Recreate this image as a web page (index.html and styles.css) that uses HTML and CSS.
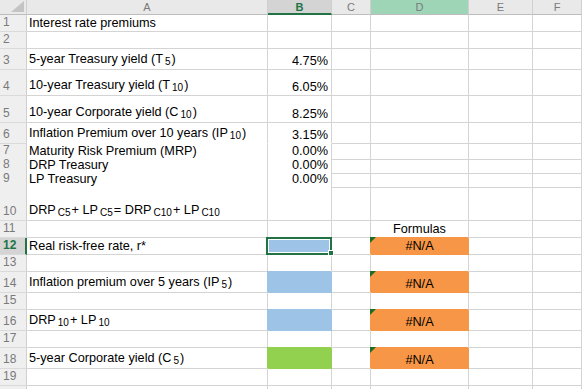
FILE: index.html
```html
<!DOCTYPE html>
<html lang="en">
<head>
<meta charset="utf-8">
<title>Interest rate premiums</title>
<link rel="stylesheet" href="styles.css">
</head>
<body>
<div class="sheet">
  <div class="row h15">
    <div class="corner"></div>
    <div class="ch">A</div>
    <div class="ch ch-active">B</div>
    <div class="ch">C</div>
    <div class="ch ch-hl">D</div>
    <div class="ch">E</div>
    <div class="ch">F</div>
  </div>

  <div class="row h17">
    <div class="rh">1</div>
    <div class="c">Interest rate premiums</div>
    <div class="c"></div><div class="c"></div><div class="c"></div><div class="c"></div><div class="c"></div>
  </div>
  <div class="row h17">
    <div class="rh">2</div>
    <div class="c"></div><div class="c"></div><div class="c"></div><div class="c"></div><div class="c"></div><div class="c"></div>
  </div>
  <div class="row h21">
    <div class="rh">3</div>
    <div class="c lift">5-year Treasury yield (T<sub>5</sub>)</div>
    <div class="c num">4.75%</div>
    <div class="c"></div><div class="c"></div><div class="c"></div><div class="c"></div>
  </div>
  <div class="row h26">
    <div class="rh">4</div>
    <div class="c lift">10-year Treasury yield (T<sub>10</sub>)</div>
    <div class="c num">6.05%</div>
    <div class="c"></div><div class="c"></div><div class="c"></div><div class="c"></div>
  </div>
  <div class="row h27">
    <div class="rh">5</div>
    <div class="c lift">10-year Corporate yield (C<sub>10</sub>)</div>
    <div class="c num">8.25%</div>
    <div class="c"></div><div class="c"></div><div class="c"></div><div class="c"></div>
  </div>
  <div class="row h21">
    <div class="rh">6</div>
    <div class="c plain lift">Inflation Premium over 10 years (IP<sub>10</sub>)</div>
    <div class="c num plain">3.15%</div>
    <div class="c"></div><div class="c"></div><div class="c"></div><div class="c"></div>
  </div>
  <div class="row h14">
    <div class="rh">7</div>
    <div class="c plain">Maturity Risk Premium (MRP)</div>
    <div class="c num plain">0.00%</div>
    <div class="c"></div><div class="c"></div><div class="c"></div><div class="c"></div>
  </div>
  <div class="row h14">
    <div class="rh">8</div>
    <div class="c plain">DRP Treasury</div>
    <div class="c num plain">0.00%</div>
    <div class="c"></div><div class="c"></div><div class="c"></div><div class="c"></div>
  </div>
  <div class="row h14">
    <div class="rh">9</div>
    <div class="c plain">LP Treasury</div>
    <div class="c num plain">0.00%</div>
    <div class="c"></div><div class="c"></div><div class="c"></div><div class="c"></div>
  </div>
  <div class="row h35">
    <div class="rh">10</div>
    <div class="c lift">DRP<sub>C5</sub> + LP<sub>C5</sub> = DRP<sub>C10</sub> + LP<sub>C10</sub></div>
    <div class="c"></div><div class="c"></div><div class="c"></div><div class="c"></div><div class="c"></div>
  </div>
  <div class="row h17">
    <div class="rh">11</div>
    <div class="c"></div><div class="c"></div><div class="c"></div>
    <div class="c center">Formulas</div>
    <div class="c"></div><div class="c"></div>
  </div>
  <div class="row h17">
    <div class="rh rh-active">12</div>
    <div class="c">Real risk-free rate, r*</div>
    <div class="c fill-blue selected"><span class="handle"></span></div>
    <div class="c"></div>
    <div class="c center fill-orange err">#N/A</div>
    <div class="c"></div><div class="c"></div>
  </div>
  <div class="row h17">
    <div class="rh">13</div>
    <div class="c"></div><div class="c"></div><div class="c"></div><div class="c"></div><div class="c"></div><div class="c"></div>
  </div>
  <div class="row h21">
    <div class="rh">14</div>
    <div class="c lift">Inflation premium over 5 years (IP<sub>5</sub>)</div>
    <div class="c fill-blue"></div>
    <div class="c"></div>
    <div class="c center fill-orange err">#N/A</div>
    <div class="c"></div><div class="c"></div>
  </div>
  <div class="row h17">
    <div class="rh">15</div>
    <div class="c"></div><div class="c"></div><div class="c"></div><div class="c"></div><div class="c"></div><div class="c"></div>
  </div>
  <div class="row h21">
    <div class="rh">16</div>
    <div class="c lift">DRP<sub>10</sub> + LP<sub>10</sub></div>
    <div class="c fill-blue"></div>
    <div class="c"></div>
    <div class="c center fill-orange err">#N/A</div>
    <div class="c"></div><div class="c"></div>
  </div>
  <div class="row h17">
    <div class="rh">17</div>
    <div class="c"></div><div class="c"></div><div class="c"></div><div class="c"></div><div class="c"></div><div class="c"></div>
  </div>
  <div class="row h21">
    <div class="rh">18</div>
    <div class="c lift">5-year Corporate yield (C<sub>5</sub>)</div>
    <div class="c fill-green"></div>
    <div class="c"></div>
    <div class="c center fill-orange err">#N/A</div>
    <div class="c"></div><div class="c"></div>
  </div>
  <div class="row h17">
    <div class="rh">19</div>
    <div class="c"></div><div class="c"></div><div class="c"></div><div class="c"></div><div class="c"></div><div class="c"></div>
  </div>
  <div class="row h17">
    <div class="rh"></div>
    <div class="c"></div><div class="c"></div><div class="c"></div><div class="c"></div><div class="c"></div><div class="c"></div>
  </div>
</div>
</body>
</html>
```

FILE: styles.css
```css
* {
  box-sizing: border-box;
}

html, body {
  margin: 0;
  padding: 0;
  background: #ffffff;
  overflow: hidden;
}

body {
  font-family: "Liberation Sans", Arial, sans-serif;
}

.sheet {
  width: 582px;
  height: 389px;
  overflow: hidden;
}

/* every row shares the same column template: row header, A..F */
.row {
  display: grid;
  grid-template-columns: 27px 241px 64px 39px 98px 64px 1fr;
}

.h14 { height: 14px; }
.h15 { height: 15px; }
.h17 { height: 17px; }
.h21 { height: 21px; }
.h26 { height: 26px; }
.h27 { height: 27px; }
.h35 { height: 35px; }

/* column headers */
.corner {
  position: relative;
  background: #e9e9e9;
  border-right: 1px solid #cfcfcf;
  border-bottom: 1px solid #bdbdbd;
}

.corner::after {
  content: "";
  position: absolute;
  right: 2px;
  bottom: 2px;
  width: 0;
  height: 0;
  border-left: 13px solid transparent;
  border-bottom: 11px solid #c4c4c4;
}

.ch {
  background: #e9e9e9;
  border-right: 1px solid #cfcfcf;
  border-bottom: 1px solid #bdbdbd;
  display: flex;
  align-items: center;
  justify-content: center;
  font-size: 11px;
  line-height: 12px;
  color: #7a7a7a;
}

.ch-active {
  background: #d4d4d4;
  border-bottom: 2px solid #217346;
  font-weight: 700;
  color: #217346;
}

.ch-hl {
  background: #9fd5b7;
}

/* row headers */
.rh {
  background: #efefef;
  border-right: 1px solid #cfcfcf;
  border-bottom: 1px solid #dadada;
  display: flex;
  align-items: flex-end;
  padding: 0 0 2px 3px;
  font-size: 12px;
  line-height: 13px;
  color: #7a7a7a;
}

.rh-active {
  background: #d4d4d4;
  border-right: 2px solid #217346;
  font-weight: 700;
  color: #217346;
}

/* worksheet cells */
.c {
  border-right: 1px solid #d4d4d4;
  border-bottom: 1px solid #d4d4d4;
  display: flex;
  align-items: flex-end;
  padding: 0 2px 1px 2px;
  font-size: 12.7px;
  line-height: 14px;
  color: #000000;
  white-space: nowrap;
}

.c sub {
  font-size: 10px;
  vertical-align: baseline;
  position: relative;
  top: 3px;
  margin: 0 1px 0 2px;
}

/* rows carrying subscripts sit a little higher */
.lift {
  padding-bottom: 3px;
}

.num {
  justify-content: flex-end;
  padding-right: 3px;
}

.center {
  justify-content: center;
}

/* white-filled block hides the horizontal grid lines */
.plain {
  border-bottom-color: #ffffff;
}

.fill-blue {
  background: #9dc3e6;
  border-color: #9dc3e6;
  box-shadow: -1px -1px 0 #9dc3e6;
}

.fill-green {
  background: #92d050;
  border-color: #92d050;
  box-shadow: -1px -1px 0 #92d050;
}

.fill-orange {
  background: #f79646;
  border-color: #f79646;
  box-shadow: -1px -1px 0 #f79646;
}

/* green error indicator in the top-left corner */
.err {
  position: relative;
}

.err::before {
  content: "";
  position: absolute;
  left: -1px;
  top: -1px;
  width: 0;
  height: 0;
  border-top: 6px solid #1e6b24;
  border-right: 6px solid transparent;
}

/* active cell frame with fill handle */
.selected {
  position: relative;
}

.selected::after {
  content: "";
  position: absolute;
  left: -2px;
  top: -1px;
  right: -1px;
  bottom: -1px;
  border: 2px solid #217346;
  box-shadow: inset 0 0 0 1px #ffffff;
}

.handle {
  position: absolute;
  right: -3px;
  bottom: -2px;
  width: 6px;
  height: 6px;
  background: #217346;
  border: 1px solid #ffffff;
  z-index: 1;
}
```
